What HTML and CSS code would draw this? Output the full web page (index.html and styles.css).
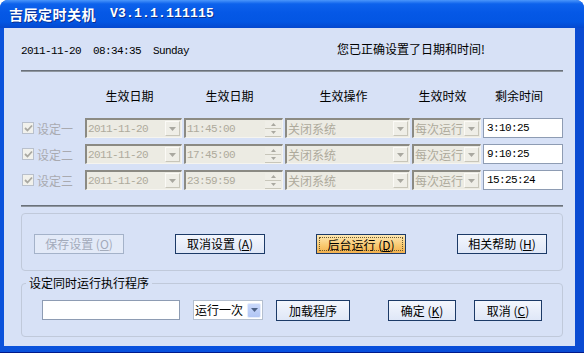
FILE: index.html
```html
<!DOCTYPE html>
<html lang="zh-CN">
<head>
  <meta charset="UTF-8" />
  <title>吉辰定时关机</title>
  <link rel="stylesheet" href="styles.css">
</head>
<body>
  <div class="window">
    <div class="titlebar">
      <span class="title-cn">吉辰定时关机</span>
      <span class="title-ver">V3.1.1.111115</span>
    </div>
    <div class="frame">
      <div class="client">
        <div class="info">
          <span class="clock mono">2011-11-20  08:34:35  Sunday</span>
          <span class="status">您已正确设置了日期和时间!</span>
        </div>
        <div class="sep"></div>

        <div class="row head">
          <span class="w-opt"></span>
          <span class="w-date">生效日期</span>
          <span class="w-time">生效日期</span>
          <span class="w-op">生效操作</span>
          <span class="w-freq">生效时效</span>
          <span class="w-left">剩余时间</span>
        </div>

        <div class="rows">
          <div class="row">
            <label class="opt w-opt"><span class="check"><svg width="9" height="8" viewBox="0 0 9 8"><path d="M1 4l2.5 2.5L8 1.5" fill="none" stroke="#aaa9a2" stroke-width="1.8"/></svg></span>设定一</label>
            <div class="combo w-date"><span class="val mono">2011-11-20</span><span class="drop"><svg width="7" height="4" viewBox="0 0 7 4"><path d="M0 0h7L3.5 4z" fill="#a9a8a0"/></svg></span></div>
            <div class="combo w-time"><span class="val mono">11:45:00</span><span class="spin"><span class="half"><svg width="5" height="3" viewBox="0 0 5 3"><path d="M0 3h5L2.5 0z" fill="#a9a8a0"/></svg></span><span class="half"><svg width="5" height="3" viewBox="0 0 5 3"><path d="M0 0h5L2.5 3z" fill="#a9a8a0"/></svg></span></span></div>
            <div class="combo w-op"><span class="val">关闭系统</span><span class="drop"><svg width="7" height="4" viewBox="0 0 7 4"><path d="M0 0h7L3.5 4z" fill="#a9a8a0"/></svg></span></div>
            <div class="combo w-freq"><span class="val">每次运行</span><span class="drop"><svg width="7" height="4" viewBox="0 0 7 4"><path d="M0 0h7L3.5 4z" fill="#a9a8a0"/></svg></span></div>
            <div class="field w-left mono">3:10:25</div>
          </div>
          <div class="row">
            <label class="opt w-opt"><span class="check"><svg width="9" height="8" viewBox="0 0 9 8"><path d="M1 4l2.5 2.5L8 1.5" fill="none" stroke="#aaa9a2" stroke-width="1.8"/></svg></span>设定二</label>
            <div class="combo w-date"><span class="val mono">2011-11-20</span><span class="drop"><svg width="7" height="4" viewBox="0 0 7 4"><path d="M0 0h7L3.5 4z" fill="#a9a8a0"/></svg></span></div>
            <div class="combo w-time"><span class="val mono">17:45:00</span><span class="spin"><span class="half"><svg width="5" height="3" viewBox="0 0 5 3"><path d="M0 3h5L2.5 0z" fill="#a9a8a0"/></svg></span><span class="half"><svg width="5" height="3" viewBox="0 0 5 3"><path d="M0 0h5L2.5 3z" fill="#a9a8a0"/></svg></span></span></div>
            <div class="combo w-op"><span class="val">关闭系统</span><span class="drop"><svg width="7" height="4" viewBox="0 0 7 4"><path d="M0 0h7L3.5 4z" fill="#a9a8a0"/></svg></span></div>
            <div class="combo w-freq"><span class="val">每次运行</span><span class="drop"><svg width="7" height="4" viewBox="0 0 7 4"><path d="M0 0h7L3.5 4z" fill="#a9a8a0"/></svg></span></div>
            <div class="field w-left mono">9:10:25</div>
          </div>
          <div class="row">
            <label class="opt w-opt"><span class="check"><svg width="9" height="8" viewBox="0 0 9 8"><path d="M1 4l2.5 2.5L8 1.5" fill="none" stroke="#aaa9a2" stroke-width="1.8"/></svg></span>设定三</label>
            <div class="combo w-date"><span class="val mono">2011-11-20</span><span class="drop"><svg width="7" height="4" viewBox="0 0 7 4"><path d="M0 0h7L3.5 4z" fill="#a9a8a0"/></svg></span></div>
            <div class="combo w-time"><span class="val mono">23:59:59</span><span class="spin"><span class="half"><svg width="5" height="3" viewBox="0 0 5 3"><path d="M0 3h5L2.5 0z" fill="#a9a8a0"/></svg></span><span class="half"><svg width="5" height="3" viewBox="0 0 5 3"><path d="M0 0h5L2.5 3z" fill="#a9a8a0"/></svg></span></span></div>
            <div class="combo w-op"><span class="val">关闭系统</span><span class="drop"><svg width="7" height="4" viewBox="0 0 7 4"><path d="M0 0h7L3.5 4z" fill="#a9a8a0"/></svg></span></div>
            <div class="combo w-freq"><span class="val">每次运行</span><span class="drop"><svg width="7" height="4" viewBox="0 0 7 4"><path d="M0 0h7L3.5 4z" fill="#a9a8a0"/></svg></span></div>
            <div class="field w-left mono">15:25:24</div>
          </div>
        </div>

        <div class="sep sep-low"></div>

        <div class="group actions">
          <button class="btn" disabled>保存设置 (<u>O</u>)</button>
          <button class="btn">取消设置 (<u>A</u>)</button>
          <button class="btn focus"><span class="focus-ring">后台运行 (<u>D</u>)</span></button>
          <button class="btn">相关帮助 (<u>H</u>)</button>
        </div>

        <fieldset class="group runner">
          <legend>设定同时运行执行程序</legend>
          <div class="runner-row">
            <div class="field path"></div>
            <div class="select"><span class="val">运行一次</span><span class="drop-xp"><svg width="7" height="4" viewBox="0 0 7 4"><path d="M0 0h7L3.5 4z" fill="#4d6185"/></svg></span></div>
            <button class="btn w-load">加载程序</button>
            <button class="btn w-ok">确定 (<u>K</u>)</button>
            <button class="btn w-cancel">取消 (<u>C</u>)</button>
          </div>
        </fieldset>
      </div>
    </div>
  </div>
</body>
</html>
```

FILE: styles.css
```css
* {
  box-sizing: border-box;
}

body {
  margin: 0;
  background: #ffffff;
  font-family: "Noto Sans CJK SC", sans-serif;
  font-size: 12px;
  color: #000;
}

.mono {
  font-family: "Liberation Mono", "Noto Sans CJK SC", monospace;
  font-size: 11px;
  letter-spacing: -0.6px;
  white-space: pre;
}

.window {
  width: 584px;
  height: 353px;
  display: flex;
  flex-direction: column;
  border-radius: 8px 8px 0 0;
  overflow: hidden;
  background: #0a4fd6;
}

.titlebar {
  height: 28px;
  flex: none;
  display: flex;
  align-items: center;
  gap: 14px;
  padding: 0 0 1px 9px;
  color: #fff;
  font-weight: bold;
  text-shadow: 1px 1px #0b2f8f;
  background: linear-gradient(#4a96fb, #0d62ec 14%, #0558e6 45%, #0356e3 78%, #0548ce);
}

.title-cn {
  font-size: 14px;
  letter-spacing: 0.5px;
}

.title-ver {
  font-family: "Liberation Mono", monospace;
  font-size: 13px;
  letter-spacing: 0.2px;
}

.frame {
  flex: 1;
  display: flex;
  padding: 0 9px 6px 4px;
  background: linear-gradient(to right, #0a52db, #0750e0 50%, #0a4bd2);
  border-bottom: 1px solid #00198a;
}

.client {
  flex: 1;
  display: flex;
  flex-direction: column;
  padding: 0 12px 0 17px;
  background: #d7e1f6;
}

.info {
  height: 42px;
  display: flex;
  align-items: flex-start;
  padding-top: 14px;
  line-height: 18px;
}

.status {
  margin-left: 148px;
  margin-top: -2px;
}

.sep {
  height: 2px;
  border-top: 1px solid #6a717b;
  border-bottom: 1px solid #8f969f;
}

.sep-low {
  margin-top: 15px;
}

.row {
  display: flex;
  gap: 2px;
  height: 20px;
}

.head {
  margin-top: 16px;
  height: 16px;
  line-height: 16px;
}

.head span {
  text-align: center;
  padding-right: 8px;
}

.rows {
  margin-top: 14px;
  display: flex;
  flex-direction: column;
  gap: 6px;
}

.w-opt { width: 62px; }
.w-date { width: 97px; }
.w-time { width: 99px; }
.w-op { width: 125px; }
.w-freq { width: 69px; }
.w-left { width: 80px; }

.opt {
  display: flex;
  align-items: center;
  gap: 3px;
  padding-left: 1px;
  color: #a9aab0;
}

.check {
  width: 12px;
  height: 12px;
  display: flex;
  align-items: center;
  justify-content: center;
  border: 1px solid #b9c0cc;
  background: #f1f1ec;
}

.combo {
  height: 20px;
  display: flex;
  align-items: center;
  padding-right: 1px;
  border-style: solid;
  border-width: 2px 1px 1px 2px;
  border-color: #8b8a83 #f5f4ef #f5f4ef #8b8a83;
  background: #ecebe3;
  color: #aeaa9c;
}

.val {
  flex: 1;
  min-width: 0;
  padding-left: 1px;
  line-height: 16px;
  white-space: nowrap;
}

.drop {
  flex: none;
  width: 15px;
  height: 15px;
  display: flex;
  align-items: center;
  justify-content: center;
  background: #efeee7;
  border: 1px solid;
  border-color: #fbfaf6 #c8c6ba #c8c6ba #fbfaf6;
}

.spin {
  flex: none;
  width: 16px;
  height: 16px;
  display: flex;
  flex-direction: column;
}

.half {
  flex: 1;
  display: flex;
  align-items: center;
  justify-content: center;
  background: #efeee7;
  border-bottom: 1px solid #c8c6ba;
}

.field {
  height: 20px;
  display: flex;
  align-items: center;
  padding-left: 3px;
  background: #fff;
  border: 1px solid #8e9cb3;
  color: #000;
}

.group {
  border: 1px solid #c0c9da;
  border-radius: 4px;
}

.actions {
  margin-top: 6px;
  height: 58px;
  display: flex;
  align-items: flex-start;
  gap: 51px;
  padding: 20px 0 0 12px;
}

.btn {
  height: 20px;
  width: 90px;
  padding: 0;
  border: 1px solid #1c3a67;
  background: linear-gradient(#f3f6fd, #dfe7f7);
  font-family: "Noto Sans CJK SC", sans-serif;
  font-size: 12px;
  color: #000;
  line-height: 16px;
}

.btn u {
  text-underline-offset: 1px;
}

.btn:disabled {
  border-color: #a4b2c9;
  color: #a3abbb;
  background: #e3eaf8;
}

.btn.focus {
  background: linear-gradient(#fde8b4, #f8c86e 60%, #f2b04e);
  padding: 2px;
}

.focus-ring {
  display: block;
  height: 100%;
  border: 1px dotted #6b5a2f;
  line-height: 14px;
}

.runner {
  margin: 5px 0 0;
  min-width: 0;
  padding: 10px 0 15px 4px;
  height: 61px;
}

.runner legend {
  padding: 0 3px;
  line-height: 14px;
}

.runner-row {
  display: flex;
  align-items: flex-start;
  padding-left: 16px;
}

.path {
  width: 138px;
  border-color: #8e9cb3;
}

.select {
  margin-left: 13px;
  width: 70px;
  height: 20px;
  display: flex;
  align-items: center;
  padding-right: 1px;
  background: #fff;
  border: 1px solid #b4bfcf;
}

.drop-xp {
  flex: none;
  width: 14px;
  height: 15px;
  display: flex;
  align-items: center;
  justify-content: center;
  border: 1px solid #e6edfc;
  border-radius: 2px;
  background: linear-gradient(#c9d8fb, #b2c6f4);
}

.runner .btn {
  height: 21px;
}

.w-load {
  margin-left: 13px;
  width: 74px;
}

.w-ok {
  margin-left: 38px;
  width: 68px;
}

.w-cancel {
  margin-left: 18px;
  width: 68px;
}
```
